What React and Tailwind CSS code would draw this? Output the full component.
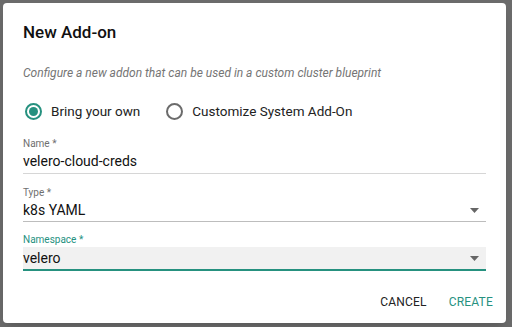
import { useState } from 'react';

const TEAL = 'text-[#26917f]';

const Radio = ({ checked, label, onClick }) => (
  <button onClick={onClick} className="flex items-center gap-[9px]">
    <span
      className={`flex h-[17px] w-[17px] items-center justify-center rounded-full border-2 ${
        checked ? 'border-[#26917f]' : 'border-[#6b6b6b]'
      }`}
    >
      {checked && <span className="h-[9px] w-[9px] rounded-full bg-[#26917f]" />}
    </span>
    <span className="text-[13.5px] text-[#222]">{label}</span>
  </button>
);

const Caret = () => (
  <svg width="9" height="5" viewBox="0 0 9 5" className="mr-[7px]">
    <path d="M0 0 H9 L4.5 5 Z" fill="#666" />
  </svg>
);

export default function App() {
  const [mode, setMode] = useState('own');

  return (
    <div className="h-[327px] w-[512px] bg-[#6b6b6b] p-[3px] pr-[6px] pb-[4px] font-['Roboto',sans-serif]">
      <div className="flex h-full flex-col rounded-[4px] bg-white px-[20px] pt-[19px] shadow-lg">
        {/* Title */}
        <h2 className="text-[17px] leading-[20px] font-medium text-[#111]">New Add-on</h2>

        <p className="mt-[23px] text-[12px] leading-[16px] italic text-[#757575]">
          Configure a new addon that can be used in a custom cluster blueprint
        </p>

        {/* Radios */}
        <div className="mt-[20px] flex items-center gap-[26px] pl-[2px]">
          <Radio checked={mode === 'own'} label="Bring your own" onClick={() => setMode('own')} />
          <Radio checked={mode === 'system'} label="Customize System Add-On" onClick={() => setMode('system')} />
        </div>

        {/* Name */}
        <div className="mt-[17px] border-b border-[#d6d6d6]">
          <div className="text-[10px] leading-[12px] text-[#6f6f6f]">Name *</div>
          <div className="mt-[1px] pb-[2px] text-[14px] leading-[20px] text-[#111]">velero-cloud-creds</div>
        </div>

        {/* Type */}
        <div className="mt-[13px] border-b border-[#bdbdbd]">
          <div className="text-[10px] leading-[12px] text-[#6f6f6f]">Type *</div>
          <div className="mt-[1px] flex items-center justify-between pb-[1px] text-[14px] leading-[20px] text-[#111]">
            <span>k8s YAML</span>
            <Caret />
          </div>
        </div>

        {/* Namespace */}
        <div className="mt-[12px]">
          <div className={`text-[10px] leading-[12px] ${TEAL}`}>Namespace *</div>
          <div className="mt-[1px] flex h-[24px] items-center justify-between border-b-2 border-[#26917f] bg-[#f1f1f1] text-[14px] text-[#111]">
            <span>velero</span>
            <Caret />
          </div>
        </div>

        {/* Actions */}
        <div className="mt-[22px] flex justify-end gap-[22px] text-[12px] tracking-[0.2px]">
          <button className="text-[#222]">CANCEL</button>
          <button className={`-mr-[7px] ${TEAL}`}>CREATE</button>
        </div>
      </div>
    </div>
  );
}
